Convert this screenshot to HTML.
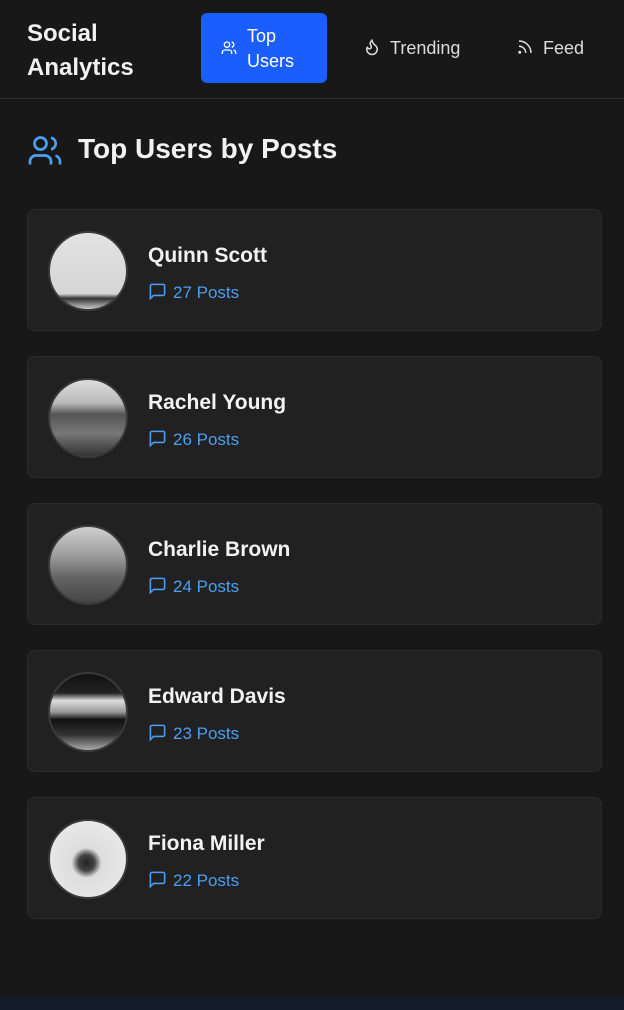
<!DOCTYPE html>
<html><head><meta charset="utf-8"><style>
*{margin:0;padding:0;box-sizing:border-box}
body{width:624px;height:1010px;background:#181818;font-family:"Liberation Sans",sans-serif;color:#f2f2f2;position:relative;overflow:hidden}
.hdr{position:absolute;left:0;top:0;width:624px;height:99px;border-bottom:1px solid #2e2e2e}
.logo{position:absolute;left:27px;top:17px;font-size:24px;font-weight:bold;line-height:34px}
.btn{position:absolute;left:201px;top:13px;width:126px;height:70px;background:#1a5ffd;border-radius:6px}
.btn span{position:absolute;left:46px;top:11px;font-size:18px;line-height:25px;color:#fff}
.nav{position:absolute;top:38px;font-size:18px;color:#ddd}
h1{position:absolute;left:78px;top:133px;font-size:28px;font-weight:bold}
.card{position:absolute;left:27px;width:575px;height:122px;background:#212121;border:1px solid #2c2c2c;border-radius:8px}
.av{position:absolute;left:20px;top:21px;width:80px;height:80px;border-radius:50%;border:2px solid #3a3a3a}
.nm{position:absolute;left:120px;top:34px;font-size:21px;font-weight:bold}
.ps{position:absolute;left:120px;top:72px;font-size:17px;color:#4c9ef2}
.ps svg{vertical-align:-3px;margin-right:6px}
.foot{position:absolute;left:0;top:997px;width:624px;height:13px;background:#131c2a}
</style></head><body>
<div class="hdr">
<div class="logo">Social<br>Analytics</div>
<div class="btn"><svg style="position:absolute;left:20px;top:27px" width="16" height="16" viewBox="0 0 24 24" fill="none" stroke="#fff" stroke-width="2"><circle cx="9" cy="7" r="4"/><path d="M2 21v-2a4 4 0 0 1 4-4h6a4 4 0 0 1 4 4v2M16 3.1a4 4 0 0 1 0 7.8M22 21v-2a4 4 0 0 0-3-3.9"/></svg><span>Top<br>Users</span></div>
<div class="nav" style="left:363px"><svg width="18" height="18" viewBox="0 0 24 24" fill="none" stroke="#ddd" stroke-width="2" style="vertical-align:-2px;margin-right:9px"><path d="M8.5 14.5A2.5 2.5 0 0 0 11 12c0-1.4-.5-2-1-3-1.1-2.1-.2-4 2-6 .5 2.5 2 4.9 4 6.5 2 1.6 3 3.5 3 5.5a7 7 0 1 1-14 0c0-1.2.4-2.3 1-3.3a2.5 2.5 0 0 0 2.5 2.8z"/></svg>Trending</div>
<div class="nav" style="left:516px"><svg width="18" height="18" viewBox="0 0 24 24" fill="none" stroke="#ddd" stroke-width="2" style="vertical-align:-2px;margin-right:9px"><path d="M4 11a9 9 0 0 1 9 9M4 4a16 16 0 0 1 16 16"/><circle cx="5" cy="19" r="1"/></svg>Feed</div>
</div>
<svg style="position:absolute;left:27px;top:133px" width="36" height="36" viewBox="0 0 24 24" fill="none" stroke="#4c9ef2" stroke-width="1.8"><circle cx="9" cy="7" r="4"/><path d="M2 21v-2a4 4 0 0 1 4-4h6a4 4 0 0 1 4 4v2M16 3.1a4 4 0 0 1 0 7.8M22 21v-2a4 4 0 0 0-3-3.9"/></svg>
<h1>Top Users by Posts</h1>

<div class="card" style="top:209px"><div class="av" style="background:linear-gradient(#e2e2e2 0%,#d6d6d6 80%,#333 86%,#ccc 100%)"></div><div class="nm">Quinn Scott</div><div class="ps"><svg width="19" height="19" viewBox="0 0 24 24" fill="none" stroke="#4c9ef2" stroke-width="2"><path d="M21 15a2 2 0 0 1-2 2H7l-4 4V5a2 2 0 0 1 2-2h14a2 2 0 0 1 2 2z"/></svg>27 Posts</div></div>
<div class="card" style="top:356px"><div class="av" style="background:linear-gradient(#ddd 0%,#bbb 30%,#555 45%,#777 70%,#333 100%)"></div><div class="nm">Rachel Young</div><div class="ps"><svg width="19" height="19" viewBox="0 0 24 24" fill="none" stroke="#4c9ef2" stroke-width="2"><path d="M21 15a2 2 0 0 1-2 2H7l-4 4V5a2 2 0 0 1 2-2h14a2 2 0 0 1 2 2z"/></svg>26 Posts</div></div>
<div class="card" style="top:503px"><div class="av" style="background:linear-gradient(#cfcfcf 0%,#999 40%,#666 65%,#444 100%)"></div><div class="nm">Charlie Brown</div><div class="ps"><svg width="19" height="19" viewBox="0 0 24 24" fill="none" stroke="#4c9ef2" stroke-width="2"><path d="M21 15a2 2 0 0 1-2 2H7l-4 4V5a2 2 0 0 1 2-2h14a2 2 0 0 1 2 2z"/></svg>24 Posts</div></div>
<div class="card" style="top:650px"><div class="av" style="background:linear-gradient(#111 0%,#222 25%,#ddd 35%,#999 50%,#111 60%,#333 80%,#aaa 100%)"></div><div class="nm">Edward Davis</div><div class="ps"><svg width="19" height="19" viewBox="0 0 24 24" fill="none" stroke="#4c9ef2" stroke-width="2"><path d="M21 15a2 2 0 0 1-2 2H7l-4 4V5a2 2 0 0 1 2-2h14a2 2 0 0 1 2 2z"/></svg>23 Posts</div></div>
<div class="card" style="top:797px"><div class="av" style="background:radial-gradient(circle at 48% 55%,#222 0,#444 14%,#ddd 26%,#eee 100%)"></div><div class="nm">Fiona Miller</div><div class="ps"><svg width="19" height="19" viewBox="0 0 24 24" fill="none" stroke="#4c9ef2" stroke-width="2"><path d="M21 15a2 2 0 0 1-2 2H7l-4 4V5a2 2 0 0 1 2-2h14a2 2 0 0 1 2 2z"/></svg>22 Posts</div></div>
<div class="foot"></div>
</body></html>
